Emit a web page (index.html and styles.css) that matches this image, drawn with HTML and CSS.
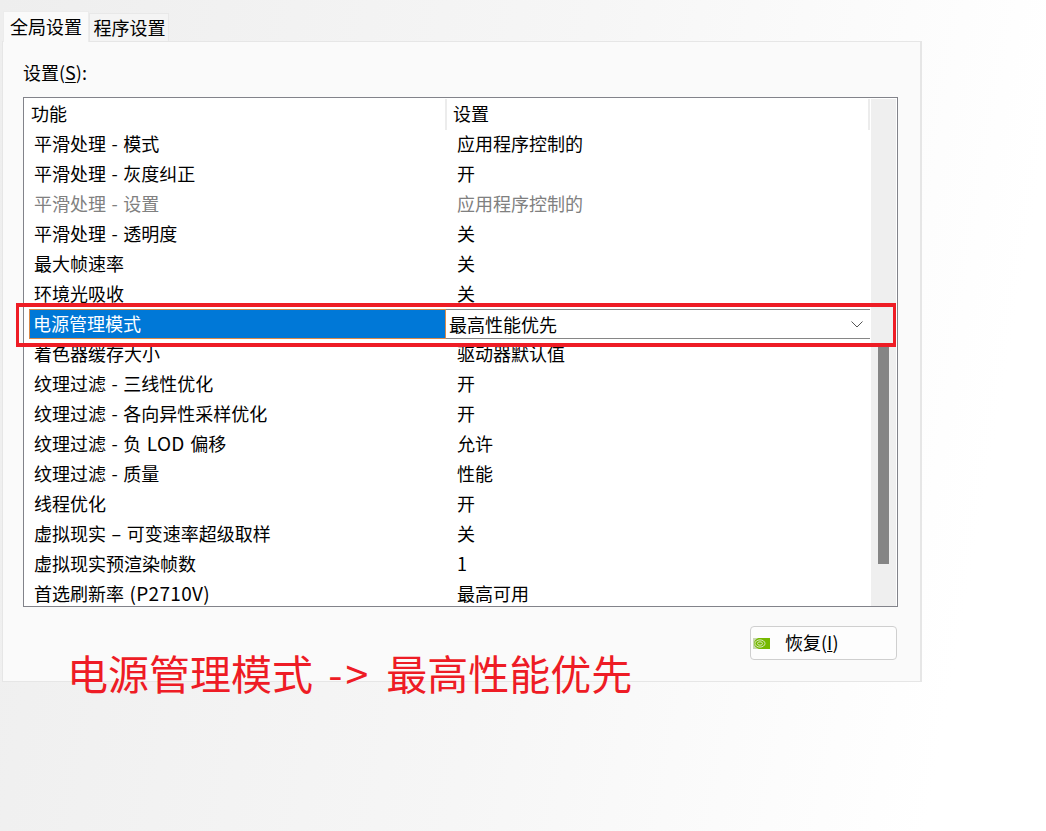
FILE: index.html
```html
<!DOCTYPE html>
<html lang="zh-CN">
<head>
<meta charset="utf-8">
<title>全局设置</title>
<link rel="stylesheet" href="styles.css">
</head>
<body>
<div class="page">
  <div class="tabs">
    <div class="tab active">全局设置</div>
    <div class="tab">程序设置</div>
  </div>
  <section class="panel">
    <div class="label">设置(<u>S</u>):</div>
    <div class="list">
      <div class="table">
        <div class="head">
          <div class="hcell hcell-a">功能</div>
          <div class="hcell hcell-b">设置</div>
          <div class="hcell hcell-c"></div>
        </div>
        <div class="row"><span class="c1">平滑处理 - 模式</span><span class="c2">应用程序控制的</span></div>
        <div class="row"><span class="c1">平滑处理 - 灰度纠正</span><span class="c2">开</span></div>
        <div class="row off"><span class="c1">平滑处理 - 设置</span><span class="c2">应用程序控制的</span></div>
        <div class="row"><span class="c1">平滑处理 - 透明度</span><span class="c2">关</span></div>
        <div class="row"><span class="c1">最大帧速率</span><span class="c2">关</span></div>
        <div class="row"><span class="c1">环境光吸收</span><span class="c2">关</span></div>
        <div class="row selected">
          <span class="sel-name">电源管理模式</span>
          <span class="sel-value">最高性能优先
            <svg class="chev" width="12" height="7" viewBox="0 0 12 7"><path d="M.5.5 6 6l5.500-5.500" fill="none" stroke="#555" stroke-width="1"/></svg>
          </span>
        </div>
        <div class="row"><span class="c1">着色器缓存大小</span><span class="c2">驱动器默认值</span></div>
        <div class="row"><span class="c1">纹理过滤 - 三线性优化</span><span class="c2">开</span></div>
        <div class="row"><span class="c1">纹理过滤 - 各向异性采样优化</span><span class="c2">开</span></div>
        <div class="row"><span class="c1">纹理过滤 - 负 <span class="latin">LOD</span> 偏移</span><span class="c2">允许</span></div>
        <div class="row"><span class="c1">纹理过滤 - 质量</span><span class="c2">性能</span></div>
        <div class="row"><span class="c1">线程优化</span><span class="c2">开</span></div>
        <div class="row"><span class="c1">虚拟现实 – 可变速率超级取样</span><span class="c2">关</span></div>
        <div class="row"><span class="c1">虚拟现实预渲染帧数</span><span class="c2">1</span></div>
        <div class="row"><span class="c1">首选刷新率 <span class="latin">(P2710V)</span></span><span class="c2">最高可用</span></div>
      </div>
      <div class="scrollbar"><div class="thumb"></div></div>
    </div>
    <div class="footer">
      <button class="restore">
        <svg class="nv" width="17" height="11" viewBox="0 0 17 11"><rect width="17" height="11" fill="#76b900"/><path d="M0 0h5.500C2.500 1 1 3 1 5.500S3 10 6 11H0z" fill="#c9d8b0"/><ellipse cx="7" cy="5.500" rx="5" ry="3.600" fill="none" stroke="#d8e8c0" stroke-width="1"/><ellipse cx="7" cy="5.500" rx="2.500" ry="1.700" fill="none" stroke="#d8e8c0" stroke-width="1"/></svg>
        <span class="restore-text">恢复(<u>I</u>)</span>
      </button>
    </div>
  </section>
  <div class="mark"></div>
  <div class="caption">电源管理模式 <span class="arrow">-&gt;</span> 最高性能优先</div>
</div>
</body>
</html>
```
FILE: styles.css
```css
* { box-sizing: border-box; }
html, body { margin: 0; height: 100%; }
body {
  font-family: "Noto Sans CJK SC", "Noto Sans", sans-serif;
  font-size: 18px;
  color: #000;
  background: linear-gradient(100deg, #eeeeee 0%, #f6f6f6 50%, #ffffff 90%);
}
.page { position: relative; width: 1046px; height: 831px; overflow: hidden; padding-top: 10px; }
.tabs { display: flex; align-items: flex-end; height: 31px; margin-left: 3px; }
.tab {
  width: 80px; height: 28px; line-height: 26px; text-align: center; padding-left: 1px;
  background: #f4f4f4; border: 1px solid #e8e8e8; border-bottom: 0;
}
.tab.active {
  width: 86px; height: 31px; line-height: 28px; padding-left: 0; background: #fafafa;
  border-color: #ececec; position: relative; z-index: 1; margin-bottom: -1px;
}
.panel {
  width: 920px; height: 641px; margin-left: 2px; padding: 0 24px 0 20px;
  background: #fafafa; border: 1px solid #e6e6e6; border-right-width: 2px;
}
.label { height: 55px; padding-top: 17px; line-height: 26px; }
.label u { text-underline-offset: 2px; }
.list {
  display: flex; height: 510px; width: 875px; background: #fff;
  border: 1px solid #82838a; overflow: hidden;
}
.table { flex: 0 0 847px; }
.head { display: flex; height: 32px; }
.hcell { height: 31px; margin-top: 1px; line-height: 29px; border-right: 2px solid #ececec; }
.hcell-a { width: 423px; padding-left: 7px; }
.hcell-b { width: 423px; padding-left: 6px; }
.hcell-c { flex: 1; border: 0; }
.row { display: flex; height: 30px; line-height: 26px; word-spacing: 1.5px; }
.c1 { width: 433px; padding-left: 10px; white-space: nowrap; }
.c2 { white-space: nowrap; }
.latin { font-size: 19px; letter-spacing: .3px; }
.off { color: #808080; }
.selected { position: relative; padding-left: 5px; margin-top: -1px; margin-bottom: 1px; }
.sel-name {
  width: 417px; height: 30px; background: #0078d7; color: #fff;
  padding-left: 3px; border: 1px solid #d98a4a; line-height: 27px;
}
.sel-value {
  flex: 1; height: 30px; padding-left: 3px; background: #fff; color: #000; line-height: 28px;
  border-top: 1px solid #868686; border-bottom: 1px solid #868686;
  display: flex; align-items: center; justify-content: space-between; padding-right: 7px;
  margin-right: 1px;
}
.scrollbar { flex: 0 0 25px; margin-top: 1px; background: #efefef; position: relative; padding-top: 248px; padding-left: 7px; }
.thumb { width: 11px; height: 217px; background: #858585; }
.footer { display: flex; justify-content: flex-end; padding-top: 19px; width: 874px; }
.restore {
  display: flex; align-items: center; width: 147px; height: 34px; padding: 0 0 0 2px;
  font: inherit; color: #000; background: #fdfdfd; border: 1px solid #cfcfcf; border-radius: 4px;
}
.restore-text { position: relative; top: -1px; }
.nv { margin-right: 15px; }
.mark { position: absolute; left: 16px; top: 303px; width: 880px; height: 44px; border: solid #ee1c25; border-width: 4px 3px; }
.caption { position: absolute; left: 67px; top: 643px; font-size: 41px; line-height: 58px; color: #ee1c25; white-space: nowrap; word-spacing: 6px; }
.arrow { letter-spacing: 3px; }
```
